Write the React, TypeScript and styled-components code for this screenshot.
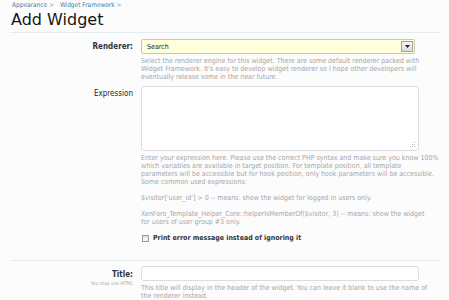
import React from 'react';
import styled, { createGlobalStyle } from 'styled-components';

const GlobalStyle = createGlobalStyle`
  html, body {
    margin: 0;
    padding: 0;
    background: #fcfcfd;
    font-family: 'DejaVu Sans Condensed', 'DejaVu Sans', sans-serif;
  }
`;

const Page = styled.div`
  width: 449px;
  height: 300px;
  overflow: hidden;
  padding: 0 10px;
  box-sizing: border-box;
`;

const Breadcrumb = styled.div`
  display: flex;
  gap: 6px;
  padding: 1px 0 0 2px;
  font-size: 6.5px;
  line-height: 9px;
  color: #4e7aa3;
`;

const Crumb = styled.span`
  &::after {
    content: ' >';
    color: #7a9bbb;
  }
`;

const Title = styled.h1`
  margin: 0;
  padding: 1px 0 3px 1px;
  font-family: 'DejaVu Sans', sans-serif;
  font-size: 16px;
  line-height: 18px;
  font-weight: normal;
  color: #161616;
  border-bottom: 1px solid #e3ebf2;
`;

const Form = styled.div`
  display: flex;
  flex-direction: column;
  padding-top: 6px;
`;

const Row = styled.div<{ $divider?: boolean }>`
  display: grid;
  grid-template-columns: 123px 278px;
  column-gap: 8px;
  padding: ${({ $divider }) => ($divider ? '5px 0 0' : '0')};
  margin-bottom: 5px;
  border-top: ${({ $divider }) => ($divider ? '1px solid #e3ebf2' : 'none')};
`;

const Label = styled.div<{ $top?: number; $plain?: boolean }>`
  text-align: right;
  padding-top: ${({ $top }) => $top ?? 3}px;
  font-size: 8px;
  line-height: 10px;
  font-weight: ${({ $plain }) => ($plain ? 'normal' : 'bold')};
  color: ${({ $plain }) => ($plain ? '#1e1e1e' : '#333')};
`;

const Explain = styled.div`
  font-size: 5px;
  line-height: 7px;
  font-style: italic;
  font-weight: normal;
  color: #aaa;
`;

const Control = styled.div`
  display: flex;
  flex-direction: column;
`;

const Select = styled.div`
  height: 15px;
  width: 274px;
  box-sizing: border-box;
  border: 1px solid #c8c8b0;
  border-radius: 2px;
  background: #ffffd9;
  display: flex;
  align-items: center;
  justify-content: space-between;
  padding: 0 1px 0 5px;
  font-size: 7px;
  color: #222;
`;

const Arrow = styled.span`
  width: 12px;
  height: 11px;
  box-sizing: border-box;
  border: 1px solid #a0a0a0;
  background: linear-gradient(#f4f4f4, #dcdcdc);
  display: flex;
  align-items: center;
  justify-content: center;
`;

const TextArea = styled.div`
  height: 65px;
  box-sizing: border-box;
  border: 1px solid #dcdcdc;
  border-radius: 3px;
  background: #fff;
  position: relative;
`;

const Grip = styled.svg`
  position: absolute;
  right: 3px;
  bottom: 3px;
`;

const Input = styled.div`
  height: 15px;
  box-sizing: border-box;
  border: 1px solid #dcdcdc;
  border-radius: 3px;
  background: #fff;
`;

const Hint = styled.p<{ $gap?: number }>`
  margin: ${({ $gap }) => $gap ?? 3}px 0 0;
  font-size: 7px;
  line-height: 8px;
  white-space: nowrap;
  color: #a6a6a6;
`;

const CheckRow = styled.label`
  display: flex;
  align-items: center;
  gap: 4px;
  margin-top: 7px;
  height: 10px;
  font-size: 7px;
  font-weight: bold;
  color: #333;
`;

const Box = styled.span`
  width: 7px;
  height: 7px;
  margin-left: 1px;
  box-sizing: border-box;
  border: 1px solid #9a9a9a;
  background: linear-gradient(#dedede, #fff);
`;

const Spacer = styled.div`
  height: 12px;
`;

export default function App() {
  return (
    <>
      <GlobalStyle />
      <Page>
        <Breadcrumb>
          <Crumb>Appearance</Crumb>
          <Crumb>Widget Framework</Crumb>
        </Breadcrumb>
        <Title>Add Widget</Title>
        <Form>
          <Row>
            <Label>Renderer:</Label>
            <Control>
              <Select>
                Search
                <Arrow>
                  <svg width="5" height="3" viewBox="0 0 5 3">
                    <path d="M0 0h5L2.5 3z" fill="#222" />
                  </svg>
                </Arrow>
              </Select>
              <Hint>
                Select the renderer engine for this widget. There are some default renderer packed with
                <br />
                Widget Framework. It's easy to develop widget renderer so I hope other developers will
                <br />
                eventually release some in the near future.
              </Hint>
            </Control>
          </Row>
          <Row>
            <Label $top={3} $plain>
              Expression
            </Label>
            <Control>
              <TextArea>
                <Grip width="5" height="5" viewBox="0 0 5 5">
                  <rect x="4" y="0" width="1" height="1" fill="#bbb" />
                  <rect x="2" y="2" width="1" height="1" fill="#bbb" />
                  <rect x="4" y="2" width="1" height="1" fill="#bbb" />
                  <rect x="0" y="4" width="1" height="1" fill="#bbb" />
                  <rect x="2" y="4" width="1" height="1" fill="#bbb" />
                  <rect x="4" y="4" width="1" height="1" fill="#bbb" />
                </Grip>
              </TextArea>
              <Hint>
                Enter your expression here. Please use the correct PHP syntax and make sure you know 100%
                <br />
                which variables are available in target position. For template position, all template
                <br />
                parameters will be accessible but for hook position, only hook parameters will be accessible.
                <br />
                Some common used expressions:
              </Hint>
              <Hint $gap={8}>$visitor['user_id'] &gt; 0 -- means: show the widget for logged in users only.</Hint>
              <Hint $gap={8}>
                XenForo_Template_Helper_Core::helperIsMemberOf($visitor, 3) -- means: show the widget
                <br />
                for users of user group #3 only.
              </Hint>
              <CheckRow>
                <Box />
                Print error message instead of ignoring it
              </CheckRow>
              <Spacer />
            </Control>
          </Row>
          <Row $divider>
            <Label $top={4}>
              Title:
              <Explain>You may use HTML</Explain>
            </Label>
            <Control>
              <Input />
              <Hint>
                This title will display in the header of the widget. You can leave it blank to use the name of
                <br />
                the renderer instead.
              </Hint>
            </Control>
          </Row>
        </Form>
      </Page>
    </>
  );
}
